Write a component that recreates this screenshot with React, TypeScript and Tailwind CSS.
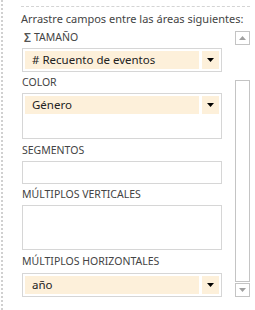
import React from "react";

const Arrow = () => (
  <svg width="7" height="4" viewBox="0 0 7 4"><path d="M0 0H7L3.5 4Z" fill="#000" /></svg>
);

const Chip = ({ label }: { label: string }) => (
  <div className="flex h-[18px] gap-[3px]">
    <div className="flex-1 bg-[#fdf0da] flex items-center pl-[7px] text-[11.5px] text-[#222] leading-none">{label}</div>
    <div className="w-[17px] bg-[#fdf0da] flex items-center justify-center"><Arrow /></div>
  </div>
);

const Label = ({ children, h = "h-[21px]" }: { children: React.ReactNode; h?: string }) => (
  <div className={`${h} flex items-center text-[10.5px] text-[#444] leading-none`}>{children}</div>
);

export default function App() {
  return (
    <div className="w-[255px] h-[310px] bg-white flex" style={{ fontFamily: '"Segoe UI", "Noto Sans", sans-serif' }}>
      <div className="ml-[1px] h-full border-l-2 border-dotted border-[#d0d0d0]" />
      <div className="ml-[18px] flex flex-col w-[229px]">
        <div className="mt-[6px] border-t border-dashed border-[#d4d4d4]" />
        <div className="mt-[4px] h-[16px] flex items-center text-[11px] text-[#444] whitespace-nowrap">Arrastre campos entre las áreas siguientes:</div>
        <div className="flex">
          <div className="w-[201px] ml-[1px] flex flex-col">
            <div className="mt-[3px] h-[16px] flex items-center text-[10.5px] text-[#444] pl-[2px]">
              <span className="text-[12px] mr-[3px] text-[#555] font-semibold">Σ</span>TAMAÑO
            </div>
            <div className="mt-[2px] border border-[#d6d6d6] h-[24px] px-[2px] pt-[2px]"><Chip label="# Recuento de eventos" /></div>
            <Label>COLOR</Label>
            <div className="border border-[#d6d6d6] h-[46px] px-[2px] pt-[2px]"><Chip label="Género" /></div>
            <Label h="h-[22px]">SEGMENTOS</Label>
            <div className="border border-[#d6d6d6] h-[23px]" />
            <Label>MÚLTIPLOS VERTICALES</Label>
            <div className="border border-[#d6d6d6] h-[45px]" />
            <Label h="h-[23px]">MÚLTIPLOS HORIZONTALES</Label>
            <div className="border border-[#d6d6d6] h-[24px] px-[2px] pt-[2px]"><Chip label="año" /></div>
          </div>
          <div className="ml-[13px] flex flex-col w-[15px]">
            <div className="mt-[4px] h-[14px] border border-[#c4c4c4] flex items-center justify-center">
              <svg width="7" height="4" viewBox="0 0 7 4"><path d="M0 4H7L3.5 0Z" fill="#a0a0a0" /></svg>
            </div>
            <div className="mt-[35px] h-[202px] border border-[#c4c4c4]" />
            <div className="mt-[1px] h-[14px] border border-[#c4c4c4] flex items-center justify-center">
              <svg width="7" height="4" viewBox="0 0 7 4"><path d="M0 0H7L3.5 4Z" fill="#a0a0a0" /></svg>
            </div>
          </div>
        </div>
      </div>
    </div>
  );
}
